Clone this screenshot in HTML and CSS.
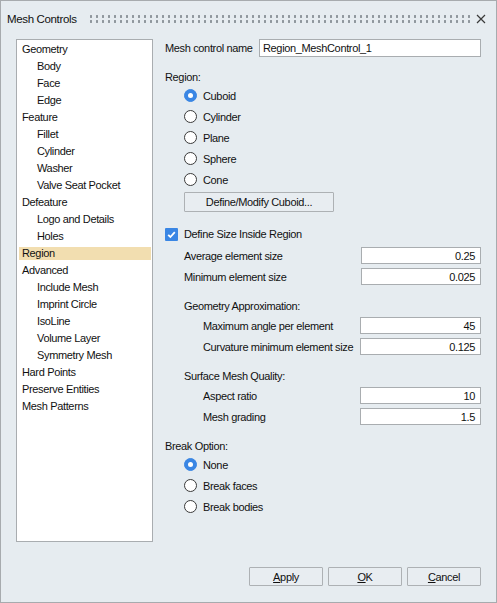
FILE: index.html
```html
<!DOCTYPE html>
<html>
<head>
<meta charset="utf-8">
<link rel="stylesheet" href="styles.css">
</head>
<body>
<div class="window">
  <div class="titlebar">
    <span class="title">Mesh Controls</span>
    <span class="grip"></span>
    <svg class="close" width="10" height="10" viewBox="0 0 10 10"><path d="M1 1 L9 9 M9 1 L1 9" stroke="#3a3a3a" stroke-width="1.2" fill="none"/></svg>
  </div>
  <div class="main">
    <div class="tree">
      <div class="node">Geometry</div>
      <div class="node child">Body</div>
      <div class="node child">Face</div>
      <div class="node child">Edge</div>
      <div class="node">Feature</div>
      <div class="node child">Fillet</div>
      <div class="node child">Cylinder</div>
      <div class="node child">Washer</div>
      <div class="node child">Valve Seat Pocket</div>
      <div class="node">Defeature</div>
      <div class="node child">Logo and Details</div>
      <div class="node child">Holes</div>
      <div class="node selected"><span>Region</span></div>
      <div class="node">Advanced</div>
      <div class="node child">Include Mesh</div>
      <div class="node child">Imprint Circle</div>
      <div class="node child">IsoLine</div>
      <div class="node child">Volume Layer</div>
      <div class="node child">Symmetry Mesh</div>
      <div class="node">Hard Points</div>
      <div class="node">Preserve Entities</div>
      <div class="node">Mesh Patterns</div>
    </div>
    <div class="form">
      <div class="name-row">
        <span class="name-label">Mesh control name</span>
        <span class="input name-input">Region_MeshControl_1</span>
      </div>
      <div class="label region-label">Region:</div>
      <div class="radios">
        <div class="radio-row"><span class="radio checked"></span><span>Cuboid</span></div>
        <div class="radio-row"><span class="radio"></span><span>Cylinder</span></div>
        <div class="radio-row"><span class="radio"></span><span>Plane</span></div>
        <div class="radio-row"><span class="radio"></span><span>Sphere</span></div>
        <div class="radio-row"><span class="radio"></span><span>Cone</span></div>
      </div>
      <div class="btn define-btn">Define/Modify Cuboid...</div>
      <div class="check-row">
        <span class="checkbox"><svg width="13" height="13" viewBox="0 0 13 13"><path d="M3.2 6.8 L5.4 9 L9.8 4.2" stroke="#fff" stroke-width="1.8" fill="none"/></svg></span>
        <span>Define Size Inside Region</span>
      </div>
      <div class="field lvl1 first"><span class="flabel">Average element size</span><span class="input num w120">0.25</span></div>
      <div class="field lvl1"><span class="flabel">Minimum element size</span><span class="input num w120">0.025</span></div>
      <div class="label sub-label">Geometry Approximation:</div>
      <div class="field lvl2 first2"><span class="flabel">Maximum angle per element</span><span class="input num w121">45</span></div>
      <div class="field lvl2"><span class="flabel">Curvature minimum element size</span><span class="input num w121">0.125</span></div>
      <div class="label sub-label">Surface Mesh Quality:</div>
      <div class="field lvl2 first2"><span class="flabel">Aspect ratio</span><span class="input num w121">10</span></div>
      <div class="field lvl2"><span class="flabel">Mesh grading</span><span class="input num w121">1.5</span></div>
      <div class="label break-label">Break Option:</div>
      <div class="radios break-radios">
        <div class="radio-row"><span class="radio checked"></span><span>None</span></div>
        <div class="radio-row"><span class="radio"></span><span>Break faces</span></div>
        <div class="radio-row"><span class="radio"></span><span>Break bodies</span></div>
      </div>
    </div>
  </div>
  <div class="footer">
    <div class="btn fbtn"><span><u>A</u>pply</span></div>
    <div class="btn fbtn"><span><u>O</u>K</span></div>
    <div class="btn fbtn"><span><u>C</u>ancel</span></div>
  </div>
</div>
</body>
</html>
```
FILE: styles.css
```css
* { box-sizing: border-box; }
html, body { margin: 0; padding: 0; }
body {
  font-family: "Liberation Sans", Arial, sans-serif;
  font-size: 11px;
  letter-spacing: -0.35px;
  color: #111;
  background: #e6ecf0;
}
.window {
  width: 497px;
  height: 603px;
  border: 1px solid #a7abae;
  background: #e6ecf0;
  display: flex;
  flex-direction: column;
}
.titlebar {
  height: 38px;
  display: flex;
  align-items: center;
  padding-left: 6px;
  padding-right: 10px;
  padding-bottom: 2px;
}
.title { width: 81px; white-space: nowrap; font-size: 11.5px; }
.grip {
  flex: 1;
  height: 10px;
  margin-right: 5px;
  background-image: radial-gradient(circle at center, #8f979d 1.1px, transparent 1.4px);
  background-size: 6px 5px;
  background-position: 0 0;
}
.close { display: block; }
.main {
  display: flex;
  align-items: flex-start;
  height: 503px;
}
.tree {
  margin-left: 15px;
  width: 137px;
  height: 503px;
  background: #fff;
  border: 1px solid #a9adb0;
  padding-top: 1px;
}
.node {
  height: 17px;
  line-height: 17px;
  padding-left: 5px;
  white-space: nowrap;
}
.node.child { padding-left: 20px; }
.node.selected { padding: 2px 1px 2px 2px; line-height: 13px; }
.node.selected span {
  display: block;
  height: 13px;
  background: #f2deb0;
  padding-left: 3px;
}
.form {
  margin-left: 12px;
  width: 316px;
  display: flex;
  flex-direction: column;
}
.name-row { display: flex; height: 18px; align-items: center; }
.name-label { width: 94px; white-space: nowrap; }
.input {
  background: #fff;
  border: 1px solid #a9adb0;
  height: 100%;
  display: flex;
  align-items: center;
  padding: 0 4px;
  white-space: nowrap;
}
.name-input { flex: 1; padding-left: 3px; }
.label { height: 16px; line-height: 16px; }
.region-label { margin-top: 12px; }
.radios { margin-left: 19px; }
.radio-row { height: 21px; display: flex; align-items: center; gap: 6px; }
.radio {
  width: 13px; height: 13px;
  border-radius: 50%;
  border: 1px solid #3a3a3a;
  background: #fff;
  flex: none;
  display: flex; align-items: center; justify-content: center;
}
.radio.checked { background: #3a86e4; border-color: #3a86e4; }
.radio.checked::after {
  content: "";
  width: 5px; height: 5px;
  border-radius: 50%;
  background: #fff;
}
.btn {
  border: 1px solid #adb1b4;
  border-radius: 1px;
  background: #e8edf1;
  display: flex; align-items: center; justify-content: center;
  white-space: nowrap;
}
.define-btn { margin-top: 2px; margin-left: 19px; width: 150px; height: 20px; }
.check-row { margin-top: 14px; height: 16px; display: flex; align-items: center; gap: 6px; }
.checkbox {
  width: 13px; height: 13px;
  background: #3a86e4;
  border-radius: 1px;
  display: block;
  flex: none;
}
.checkbox svg { display: block; }
.field { display: flex; align-items: center; height: 17px; margin-top: 4px; }
.field.first { margin-top: 5px; }
.field.first2 { margin-top: 3px; }
.lvl1 .flabel { padding-left: 19px; }
.lvl2 .flabel { padding-left: 38px; }
.flabel { flex: 1; white-space: nowrap; }
.num { justify-content: flex-end; padding-right: 5px; }
.w120 { width: 120px; }
.w121 { width: 121px; }
.sub-label { margin-top: 13px; padding-left: 19px; }
.break-label { margin-top: 13px; }
.footer {
  display: flex;
  justify-content: flex-end;
  gap: 5px;
  margin-top: 25px;
  padding-right: 15px;
}
.fbtn { width: 74px; height: 19px; }
u { text-decoration-thickness: 1px; text-underline-offset: 1px; }
```
